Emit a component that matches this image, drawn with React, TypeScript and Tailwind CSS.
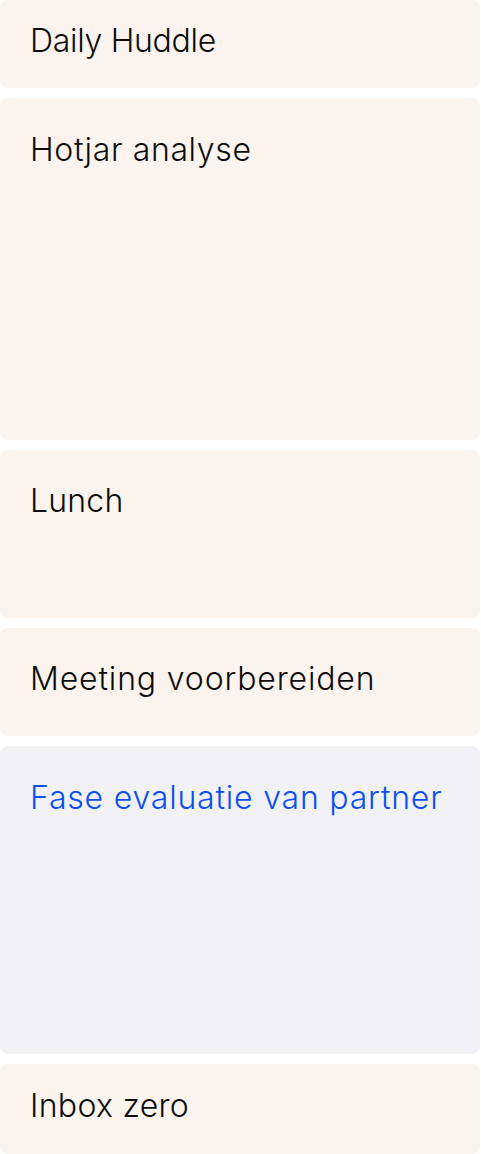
type Task = {
  title: string;
  box: string;
  text: string;
};

const tasks: Task[] = [
  { title: "Daily Huddle", box: "bg-[#fbf4ee] h-[88px] pt-[25px]", text: "tracking-[-0.3px]" },
  { title: "Hotjar analyse", box: "bg-[#fbf4ee] h-[342px] pt-[36px]", text: "tracking-[0.65px]" },
  { title: "Lunch", box: "bg-[#fbf4ee] h-[168px] pt-[35px]", text: "tracking-[0.2px]" },
  { title: "Meeting voorbereiden", box: "bg-[#fbf4ee] h-[108px] pt-[35px]", text: "tracking-[0.85px]" },
  { title: "Fase evaluatie van partner", box: "bg-[#f1f1f6] h-[308px] pt-[36px]", text: "tracking-[0.8px] text-[#0b4ff2]" },
  { title: "Inbox zero", box: "bg-[#fbf4ee] h-[90px] pt-[26px]", text: "tracking-[0.3px]" },
];

export default function App() {
  return (
    <div className="w-[481px] h-[1154px] overflow-hidden bg-white font-['Inter',sans-serif] font-light text-[#0d0d0d]">
      <div className="flex flex-col gap-[10px] w-[480px]">
        {tasks.map((t) => (
          <div key={t.title} className={`${t.box} rounded-lg px-[30px]`}>
            <p className={`text-[32px] leading-none whitespace-nowrap ${t.text}`}>{t.title}</p>
          </div>
        ))}
      </div>
    </div>
  );
}
